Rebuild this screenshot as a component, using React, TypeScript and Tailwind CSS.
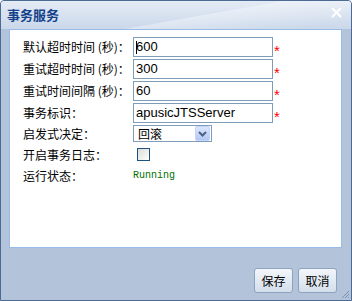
import React from "react";

const CJK = "font-['Microsoft_YaHei','Noto_Sans_CJK_SC',sans-serif]";

function Field({ label, children }: { label: string; children: React.ReactNode }) {
  return (
    <div className="flex items-center h-[20px]">
      <span className={`w-[110px] text-[12px] text-black ${CJK}`}>{label}</span>
      {children}
    </div>
  );
}

function TextBox({ value, caret }: { value: string; caret?: boolean }) {
  return (
    <div className="flex items-center">
      <div className="relative w-[140px] h-[20px] border border-[#7f9db9] bg-white flex items-center pl-[2px] text-[13px] text-black font-['Liberation_Sans',sans-serif]">
        {caret && <span className="absolute left-[2px] top-[3px] w-[1px] h-[13px] bg-black" />}
        {value}
      </div>
      <span className="ml-[1px] text-[15px] leading-none text-[#ff0000] font-['Liberation_Sans',sans-serif] mt-[6px]">*</span>
    </div>
  );
}

export default function App() {
  return (
    <div className="w-[352px] h-[301px] relative overflow-hidden rounded-t-[4px] border border-[#4b6a94] bg-[#b3c3d9] flex flex-col">
      {/* 标题栏 */}
      <div className="h-[28px] shrink-0 relative flex items-center pl-[6px] bg-gradient-to-b from-[#e4ebf5] to-[#cad8ea]">
        <div className="absolute inset-0 bg-[linear-gradient(170deg,transparent_55%,rgba(255,255,255,0.35)_56%,transparent_90%)]" />
        <span className={`relative text-[13px] font-bold text-[#15428b] ${CJK}`}>事务服务</span>
        <svg className="absolute right-[9px] top-[6px]" width="11" height="11" viewBox="0 0 11 11">
          <path d="M1 1 L10 10 M10 1 L1 10" stroke="#ffffff" strokeWidth="2" />
        </svg>
      </div>

      {/* 表单区 */}
      <div className="ml-[8px] mr-[9px] h-[219px] shrink-0 bg-white border border-[#99bbe8] pl-[13px] pt-[7px] flex flex-col gap-[2px]">
        <Field label="默认超时时间 (秒)：">
          <TextBox value="600" caret />
        </Field>
        <Field label="重试超时时间 (秒)：">
          <TextBox value="300" />
        </Field>
        <Field label="重试时间间隔 (秒)：">
          <TextBox value="60" />
        </Field>
        <Field label="事务标识：">
          <TextBox value="apusicJTSServer" />
        </Field>
        <div className="flex items-center h-[17px]">
          <span className={`w-[110px] text-[12px] text-black ${CJK}`}>启发式决定：</span>
          <div className="w-[79px] h-[17px] border border-[#7f9db9] bg-white flex items-center justify-between">
            <span className={`pl-[4px] text-[12px] text-black ${CJK}`}>回滚</span>
            <div className="w-[15px] h-[15px] mr-[1px] rounded-[2px] bg-gradient-to-b from-[#dbe6fb] to-[#b2c8f4] border border-[#c3d3fd] flex items-center justify-center">
              <svg width="9" height="6" viewBox="0 0 9 6">
                <path d="M1 1 L4.5 4.5 L8 1" stroke="#4d6185" strokeWidth="2" fill="none" />
              </svg>
            </div>
          </div>
        </div>
        <div className="flex items-center h-[21px]">
          <span className={`w-[114px] text-[12px] text-black ${CJK}`}>开启事务日志：</span>
          <div className="w-[13px] h-[13px] border border-[#1c5180] bg-gradient-to-br from-[#dcdcd7] to-[#ffffff]" />
        </div>
        <div className="flex items-center h-[17px]">
          <span className={`w-[110px] text-[12px] text-black ${CJK}`}>运行状态：</span>
          <span className="text-[10px] text-[#007000] font-['Liberation_Mono',monospace]">Running</span>
        </div>
      </div>

      {/* 按钮区 */}
      <div className="flex-1 flex justify-end items-end gap-[5px] pr-[14px] pb-[7px]">
        {["保存", "取消"].map(t => (
          <button
            key={t}
            className={`w-[39px] h-[25px] rounded-[3px] border border-[#8ea3bf] bg-gradient-to-b from-[#f3f6fa] to-[#d3deeb] text-[12px] text-black ${CJK}`}
          >
            {t}
          </button>
        ))}
      </div>
      <svg className="absolute right-[1px] bottom-[1px]" width="10" height="10" viewBox="0 0 10 10">
        <path d="M9 2 L2 9 M9 5 L5 9 M9 8 L8 9" stroke="#7a90b5" strokeWidth="1" />
      </svg>
    </div>
  );
}
